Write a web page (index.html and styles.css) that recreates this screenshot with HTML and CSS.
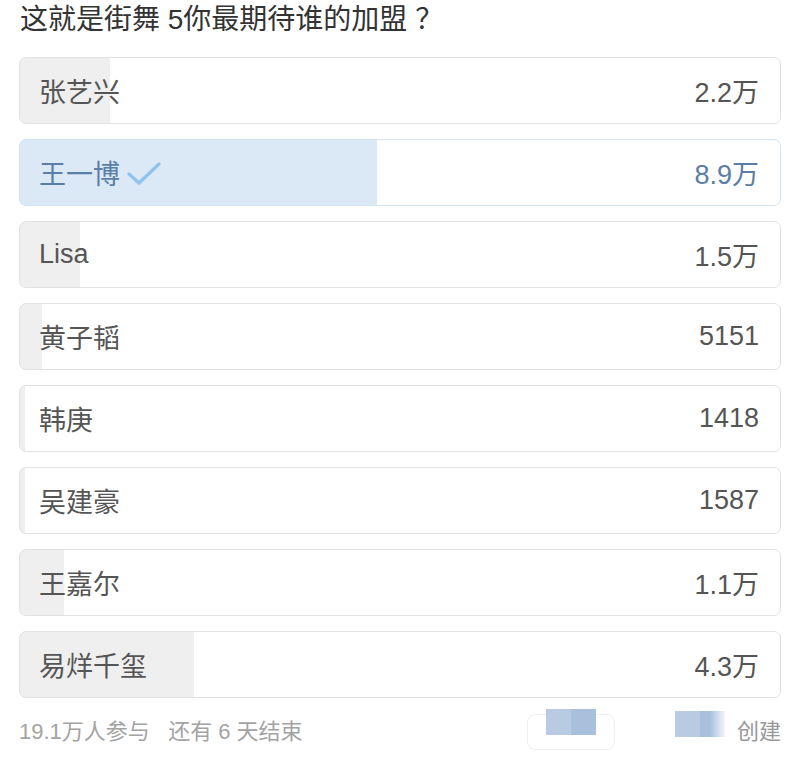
FILE: index.html
```html
<!DOCTYPE html>
<html lang="zh-CN">

<head>
    <meta charset="UTF-8">
    <meta name="viewport" content="width=device-width, initial-scale=1.0">
    <title>投票</title>
    <link rel="stylesheet" href="styles.css">
</head>

<body>
    <div class="vote">
        <h1 class="vote-title">这就是街舞 5你最期待谁的加盟 ？</h1>

        <div class="opcoes">
            <div class="opcao" style="--p: 11.8%">
                <span class="nome">张艺兴</span>
                <span class="num">2.2万</span>
            </div>
            <div class="opcao escolhida" style="--p: 47%">
                <span class="nome">王一博
                    <svg class="check" width="34" height="24" viewBox="0 0 34 24">
                        <path d="M2 12 L12 21 L32 2" fill="none" stroke="#8fc3ee" stroke-width="3.2" stroke-linecap="round" stroke-linejoin="round"/>
                    </svg>
                </span>
                <span class="num">8.9万</span>
            </div>
            <div class="opcao" style="--p: 7.9%">
                <span class="nome">Lisa</span>
                <span class="num">1.5万</span>
            </div>
            <div class="opcao" style="--p: 2.9%">
                <span class="nome">黄子韬</span>
                <span class="num">5151</span>
            </div>
            <div class="opcao" style="--p: 0.6%">
                <span class="nome">韩庚</span>
                <span class="num">1418</span>
            </div>
            <div class="opcao" style="--p: 0.6%">
                <span class="nome">吴建豪</span>
                <span class="num">1587</span>
            </div>
            <div class="opcao" style="--p: 5.8%">
                <span class="nome">王嘉尔</span>
                <span class="num">1.1万</span>
            </div>
            <div class="opcao" style="--p: 22.9%">
                <span class="nome">易烊千玺</span>
                <span class="num">4.3万</span>
            </div>
        </div>

        <div class="rodape">
            <span class="info">19.1万人参与&nbsp;&nbsp;&nbsp;还有 6 天结束</span>
            <div class="autor">
                <span class="borrao">
                    <span class="bloco"></span>
                </span>
                <span class="bloco bloco-fade"></span>
                <span class="criado">创建</span>
            </div>
        </div>
    </div>
</body>

</html>
```

FILE: styles.css
```css
body{
    margin: 0;
    background: #fff;
    font-family: "Liberation Sans", "Noto Sans CJK SC", sans-serif;
}

.vote{
    padding: 0 19px;
}

.vote-title{
    margin: 0 0 17px 1px;
    font-size: 28px;
    font-weight: normal;
    line-height: 40px;
    color: #333;
}

.opcoes{
    display: flex;
    flex-direction: column;
    gap: 15px;
}

.opcao{
    height: 65px;
    display: flex;
    justify-content: space-between;
    align-items: center;
    padding: 0 21px 0 19px;
    border: 1px solid #e2e2e2;
    border-radius: 7px;
    font-size: 27px;
    color: #555;
    background: linear-gradient(to right, #efefef var(--p), #fff var(--p));
}

.opcao.escolhida{
    border-color: #d3e3f3;
    color: #5a7ea7;
    background: linear-gradient(to right, #dbe8f5 var(--p), #fff var(--p));
}

.nome{
    display: flex;
    align-items: center;
}

.check{
    margin-left: 7px;
    margin-top: 2px;
}

.rodape{
    display: flex;
    justify-content: space-between;
    align-items: center;
    height: 62px;
    font-size: 22px;
    color: #a3a3a3;
}

.autor{
    display: flex;
    align-items: center;
}

.borrao{
    width: 86px;
    height: 34px;
    margin-right: 60px;
    border: 1px solid #efefef;
    border-radius: 8px;
    display: flex;
    justify-content: center;
    align-items: flex-start;
    margin-top: 6px;
}

.borrao .bloco{
    margin-top: -6px;
}

.bloco{
    width: 50px;
    height: 26px;
    background: linear-gradient(to right, #b8cbe2 50%, #a9c0dd 50%);
    margin-top: -10px;
}

.bloco-fade{
    background: linear-gradient(to right, #b8cbe2 0 50%, #a9c0dd 50% 70%, #f2f5fa 100%);
    margin-right: 12px;
}

.criado{
    color: #999;
}
```
